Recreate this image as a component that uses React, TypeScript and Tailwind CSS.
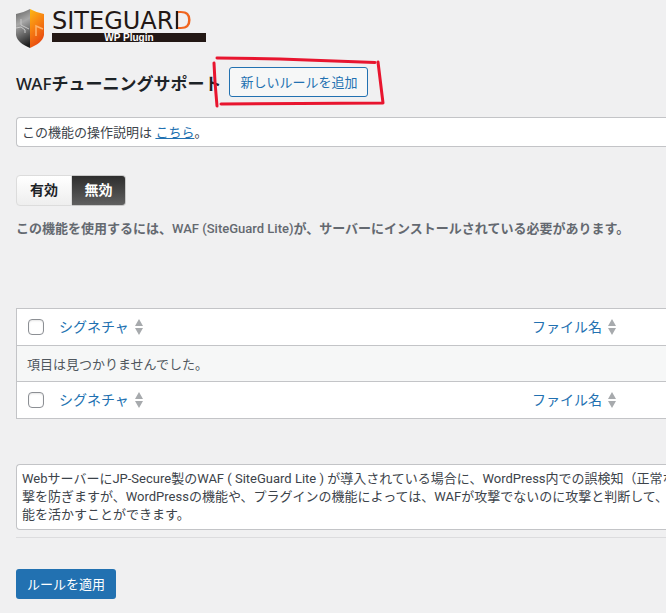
import React from "react";

function Shield() {
  return (
    <svg width="28" height="40" viewBox="0 0 28 40" aria-hidden="true">
      <defs>
        <linearGradient id="steel" x1="0.3" y1="0" x2="0.5" y2="1">
          <stop offset="0" stopColor="#6a6a6a" />
          <stop offset="0.35" stopColor="#a8a8a8" />
          <stop offset="0.65" stopColor="#6a6a6a" />
          <stop offset="1" stopColor="#1d1d1d" />
        </linearGradient>
        <linearGradient id="flame" x1="0" y1="0" x2="0.4" y2="1">
          <stop offset="0" stopColor="#fdb813" />
          <stop offset="0.5" stopColor="#f78212" />
          <stop offset="1" stopColor="#e84a10" />
        </linearGradient>
      </defs>
      <path d="M14 1C10 3 5 5 0 6V27C1 33 7 37 14 40Z" fill="url(#steel)" />
      <path d="M14 1C18 3 23 5 28 6V27C27 33 21 37 14 40Z" fill="url(#flame)" />
      <path d="M5 11V17L13 21M0 20L5 19L9 22V25" fill="none" stroke="#c8c8c8" strokeWidth="1" />
      <path d="M20 28V18L27 21" fill="none" stroke="#ffb36a" strokeWidth="1.500" />
    </svg>
  );
}

function Logo() {
  return (
    <div className="flex gap-2 pt-2">
      <Shield />
      <div className="flex w-[154px] flex-col font-['DejaVu_Sans',sans-serif]">
        <div className="h-[25px] text-[24px] leading-[27px] text-[#231815]">
          SITEGUAR
          <span className="bg-[linear-gradient(to_right,#231815_5px,#f0641e_5px)] bg-clip-text text-transparent">D</span>
        </div>
        <div className="h-[9px] bg-[#231815] text-center font-['Liberation_Sans',sans-serif] text-[10px] leading-[9px] font-bold text-white">
          WP Plugin
        </div>
      </div>
    </div>
  );
}

function SortArrows() {
  return (
    <svg width="8" height="16" viewBox="0 0 8 16" fill="#a7aaad" aria-hidden="true">
      <path d="M4 0L8 7H0ZM4 16L0 9H8Z" />
    </svg>
  );
}

function SortLink({ label }: { label: string }) {
  return (
    <a href="#" className="inline-flex items-center gap-[6px] text-[14px] leading-5 text-[#2271b1]">
      <span>{label}</span>
      <SortArrows />
    </a>
  );
}

function HeaderRow({ name }: { name: string }) {
  return (
    <tr className="h-9 bg-white">
      <td className="w-[42px] py-0 pl-[11px] align-middle">
        <input
          type="checkbox"
          aria-label={name}
          className="block size-4 appearance-none rounded-[4px] border border-[#8c8f94] bg-white shadow-[inset_0_1px_2px_rgba(0,0,0,0.1)]"
        />
      </td>
      <th scope="col" className="w-[473px] p-0 text-left align-middle font-normal">
        <SortLink label="シグネチャ" />
      </th>
      <th scope="col" className="p-0 text-left align-middle font-normal whitespace-nowrap">
        <SortLink label="ファイル名" />
      </th>
    </tr>
  );
}

export default function App() {
  return (
    <div className="relative min-h-screen overflow-hidden bg-[#f0f0f1] pb-[14px] pl-4 font-['Noto_Sans','Noto_Sans_CJK_JP',sans-serif] text-[13px] leading-[18px] text-[#3c434a]">
      <Logo />

      <div className="mt-[19px] flex items-center gap-2">
        <h1 className="pt-[3px] text-[17px] leading-[27px] font-semibold whitespace-nowrap text-[#1d2327]">
          <span className="font-medium">WAF</span>チューニングサポート
        </h1>
        <button className="h-[30px] shrink-0 rounded-[3px] border border-[#2271b1] bg-[#f6f7f7] px-[10px] whitespace-nowrap text-[#2271b1]">
          新しいルールを追加
        </button>
      </div>

      <p className="mt-5 rounded-l-[4px] border border-r-0 border-[#c3c4c7] bg-white px-[5px] py-[5px]">
        この機能の操作説明は{" "}
        <a href="#" className="text-[#2271b1] underline">
          こちら
        </a>
        。
      </p>

      <div className="mt-7 flex" role="group" aria-label="WAFチューニングサポート">
        <button className="h-[31px] w-14 rounded-l-[4px] border border-[#dcdcdc] bg-linear-to-b from-white to-[#eeeeee] pb-[2px] text-[14px] font-bold text-[#1d2327]">
          有効
        </button>
        <button
          aria-pressed="true"
          className="h-[31px] w-[54px] rounded-r-[4px] border border-l-0 border-[#c8c8c8] bg-linear-to-b from-[#2e2e2e] to-[#606060] pb-[2px] text-[14px] font-bold text-white"
        >
          無効
        </button>
      </div>

      <p className="mt-[14px] font-['Roboto','Noto_Sans_CJK_JP',sans-serif] font-semibold whitespace-nowrap text-[#646970]">
        この機能を使用するには、<span className="font-medium">WAF (SiteGuard Lite)</span>
        が、サーバーにインストールされている必要があります。
      </p>

      <table className="mt-[70px] w-full table-fixed border-separate border-spacing-0 border border-r-0 border-[#c3c4c7] bg-white">
        <thead>
          <HeaderRow name="すべて選択" />
        </thead>
        <tbody>
          <tr className="h-[37px]">
            <td colSpan={3} className="border-y border-[#c3c4c7] bg-[#f6f7f7] px-[10px] align-middle text-[#50575e]">
              項目は見つかりませんでした。
            </td>
          </tr>
        </tbody>
        <tfoot>
          <HeaderRow name="すべて選択" />
        </tfoot>
      </table>

      <p className="mt-[45px] overflow-hidden rounded-l-[4px] border border-r-0 border-[#c3c4c7] bg-white px-[5px] py-[5px] font-['Roboto','Noto_Sans_CJK_JP',sans-serif] whitespace-nowrap">
        WebサーバーにJP-Secure製のWAF ( SiteGuard Lite ) が導入されている場合に、WordPress内での誤検知（正常な
        <br />
        撃を防ぎますが、WordPressの機能や、プラグインの機能によっては、WAFが攻撃でないのに攻撃と判断して、
        <br />
        能を活かすことができます。
      </p>

      <hr className="mt-[7px] border-[#dcdcde]" />

      <button className="mt-[31px] h-[30px] rounded-[3px] bg-[#2271b1] px-[11px] whitespace-nowrap text-white">ルールを適用</button>

      <svg
        className="pointer-events-none absolute top-[54px] left-[210px]"
        width="180"
        height="56"
        viewBox="0 0 180 56"
        fill="none"
        stroke="#e8152f"
        strokeWidth="3"
        strokeLinecap="round"
        strokeLinejoin="round"
        aria-hidden="true"
      >
        <path d="M7 4L70 5L165 8.500" />
        <path d="M4 9L5 28L7 52" />
        <path d="M11 50L90 49.500L173 49L168 8" />
      </svg>
    </div>
  );
}
